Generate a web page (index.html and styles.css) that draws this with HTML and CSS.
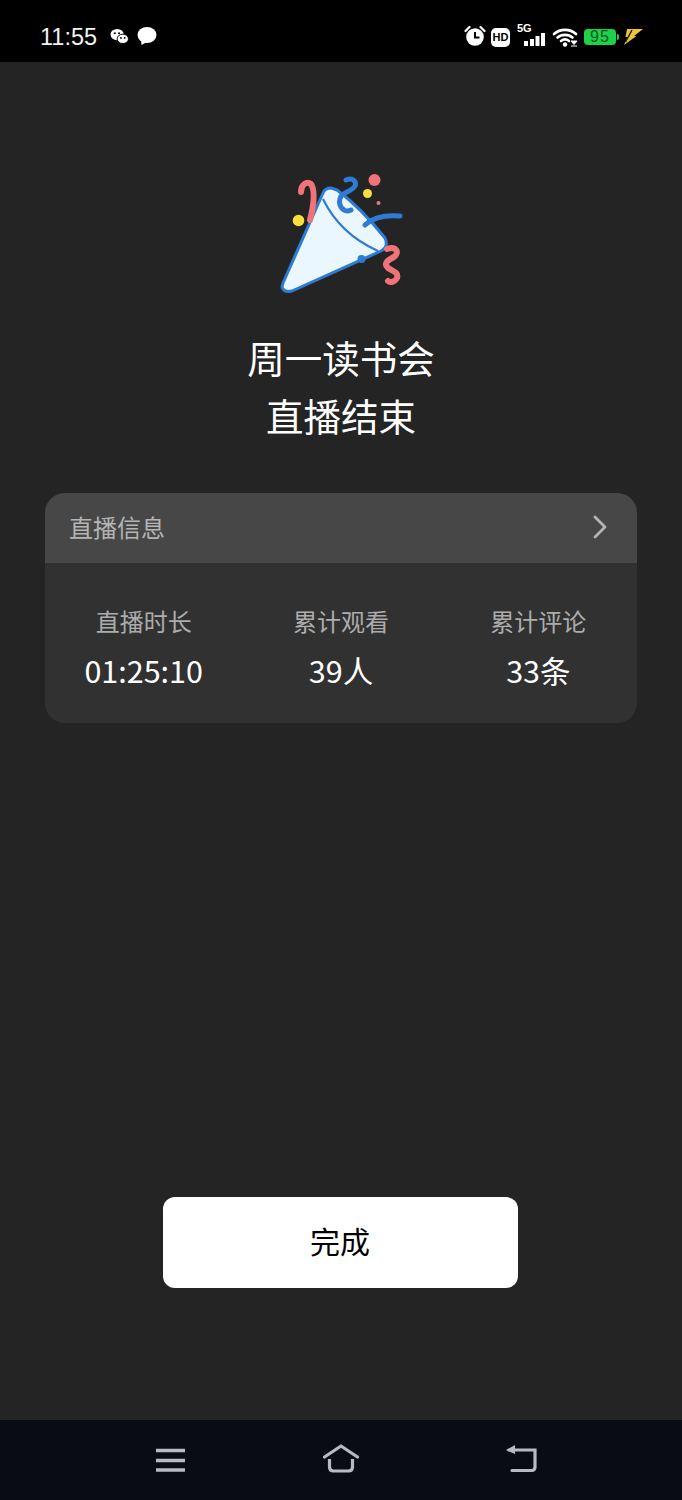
FILE: index.html
```html
<!DOCTYPE html>
<html lang="zh">
<head>
<meta charset="utf-8">
<title>直播结束</title>
<link rel="stylesheet" href="styles.css">
</head>
<body>
<div class="screen">
  <header class="status">
    <div class="status-left">
      <span class="time">11:55</span>
      <svg class="ic-wechat" viewBox="0 0 20 18"><ellipse cx="7.5" cy="7" rx="7" ry="6" fill="#fff"/><ellipse cx="13.5" cy="11.5" rx="6" ry="5" fill="#fff" stroke="#000" stroke-width="1"/><circle cx="5" cy="5.5" r="1.1" fill="#000"/><circle cx="9.5" cy="5.5" r="1.1" fill="#000"/><circle cx="11.5" cy="10.5" r="1" fill="#000"/><circle cx="15.5" cy="10.5" r="1" fill="#000"/></svg>
      <svg class="ic-msg" viewBox="0 0 20 18"><ellipse cx="10" cy="8" rx="9.5" ry="8" fill="#fff"/><path d="M4 12 L4.5 18 L10 15 Z" fill="#fff"/></svg>
    </div>
    <div class="status-right">
      <svg class="ic-alarm" viewBox="0 0 22 22"><circle cx="11" cy="12" r="8.800" fill="#fff"/><path d="M11 7V12.500H15.500" fill="none" stroke="#000" stroke-width="2"/><path d="M1.500 6L5.500 2M20.500 6L16.500 2" stroke="#fff" stroke-width="2.200" stroke-linecap="round"/></svg>
      <span class="hd">HD</span>
      <svg class="ic-signal" viewBox="0 0 28 26"><text x="0" y="10" class="sig-text">5G</text><rect x="7" y="19" width="4" height="5" fill="#fff"/><rect x="13" y="17" width="4" height="7" fill="#fff"/><rect x="18.500" y="14" width="4" height="10" fill="#fff"/><rect x="24" y="11" width="4" height="13" fill="#fff"/></svg>
      <svg class="ic-wifi" viewBox="0 0 26 20"><path d="M2 7C8 1.500 18 1.500 24 7M5.500 10.500C9.500 7 16.500 7 20.500 10.500M9 14C11.500 12 14.500 12 17 14" fill="none" stroke="#fff" stroke-width="2.600" stroke-linecap="round"/><circle cx="13" cy="17.500" r="2.200" fill="#fff"/><path d="M19 14H25L22 17.500ZM19 19H25" fill="#fff" stroke="#fff" stroke-width="1"/></svg>
      <div class="battery"><span class="battery-num">95</span></div>
      <svg class="ic-bolt" viewBox="0 0 22 18"><path d="M5 1H21L12 8L14.500 8L2 17L5.500 9L3.500 9Z" fill="#eec534"/><path d="M10 2L3.500 14" stroke="#111" stroke-width="1.400"/></svg>
    </div>
  </header>

  <main class="content">
    <svg class="party" viewBox="261 160 160 150">
      <path d="M283 283L323 193Q325 188 331 188L337 190Q361 208 385 238Q389 247 381 251L292 291Q284 293 282 287Z" fill="#eaf7ff" stroke="#2e7bd6" stroke-width="3" stroke-linejoin="round"/>
      <path d="M323 199Q340 234 378 251" fill="none" stroke="#2e7bd6" stroke-width="2.200"/>
      <path d="M310 220C314 204 315 190 311 184C307 181 301 184 301 192" fill="none" stroke="#f0737a" stroke-width="6" stroke-linecap="round"/>
      <path d="M346 180C353 177 357 182 355 186C352 191 345 192 342 195C338 200 339 207 344 210C347 212 349 211 351 210" fill="none" stroke="#2e7bd6" stroke-width="5" stroke-linecap="round"/>
      <path d="M365 225C373 217 386 215 400 216" fill="none" stroke="#2e7bd6" stroke-width="5" stroke-linecap="round"/>
      <path d="M387 249C396 246 400 252 394 257C388 260 383 263 388 268C392 271 399 272 397 278C395 282 390 283 388 281" fill="none" stroke="#f0737a" stroke-width="6" stroke-linecap="round"/>
      <circle cx="374.500" cy="180" r="6" fill="#f0737a"/>
      <circle cx="367.500" cy="193.500" r="4.500" fill="#f7e03c"/>
      <circle cx="298.500" cy="220.500" r="5.800" fill="#f7e03c"/>
      <circle cx="378.500" cy="203" r="2" fill="#e07a78"/>
      <circle cx="361.500" cy="259" r="4" fill="#2e7bd6"/>
    </svg>

    <h1 class="title">周一读书会<br>直播结束</h1>

    <section class="card">
      <div class="card-head">
        <span>直播信息</span>
        <svg class="chev" viewBox="0 0 16 24"><path d="M3 2L13 12L3 22" fill="none" stroke="#b5b5b5" stroke-width="2.800" stroke-linecap="round" stroke-linejoin="round"/></svg>
      </div>
      <div class="stats">
        <div class="stat"><div class="stat-label">直播时长</div><div class="stat-value">01:25:10</div></div>
        <div class="stat"><div class="stat-label">累计观看</div><div class="stat-value">39人</div></div>
        <div class="stat"><div class="stat-label">累计评论</div><div class="stat-value">33条</div></div>
      </div>
    </section>

    <button class="done">完成</button>
  </main>

  <nav class="navbar">
    <svg class="nav-ic" viewBox="0 0 40 40"><path d="M5 10.500H34M5 20.500H34M5 30H34" stroke="#b9bac0" stroke-width="3.600"/></svg>
    <svg class="nav-ic nav-home" viewBox="0 0 40 40"><path d="M3.500 17L20 6L36.500 17" fill="none" stroke="#b9bac0" stroke-width="3.200" stroke-linecap="round" stroke-linejoin="round"/><path d="M8.500 19V27Q8.500 31 12.500 31H27.500Q31.500 31 31.500 27V19" fill="none" stroke="#b9bac0" stroke-width="3.200"/></svg>
    <svg class="nav-ic" viewBox="0 0 40 40"><path d="M8 10H34V27Q34 30.500 30.500 30.500H11" fill="none" stroke="#b9bac0" stroke-width="3.200" stroke-linecap="round"/><path d="M5 10L14 5V14Z" fill="#b9bac0"/></svg>
  </nav>
</div>
</body>
</html>
```
FILE: styles.css
```css
* { box-sizing: border-box; }
html, body { margin: 0; padding: 0; background: #242424; }
body { font-family: "Noto Sans CJK SC", "Noto Sans", sans-serif; }
.screen { width: 682px; height: 1500px; display: flex; flex-direction: column; overflow: hidden; }

.status { height: 62px; flex: none; background: #000; color: #fff; display: flex; justify-content: space-between; align-items: center; padding: 12px 38px 0 40px; }
.status-left, .status-right { display: flex; align-items: center; }
.time { font-family: "Liberation Sans", sans-serif; font-size: 23.500px; line-height: 30px; color: #f2f2f2; width: 56px; white-space: nowrap; }
.ic-wechat { width: 19px; height: 17px; margin-left: 14px; margin-top: -2px; }
.ic-msg { width: 20px; height: 18px; margin-left: 8px; margin-top: -2px; }
.ic-alarm { width: 22px; height: 22px; margin-top: -2px; }
.hd { width: 19px; height: 19px; margin-left: 5px; background: #fff; color: #000; border-radius: 5px; font: 700 11px/19px "Liberation Sans", sans-serif; text-align: center; }
.ic-signal { width: 28px; height: 26px; margin-left: 7px; margin-top: -5px; }
.sig-text { font: 700 11px "Liberation Sans", sans-serif; fill: #fff; }
.ic-wifi { width: 26px; height: 20px; margin-left: 7px; }
.battery { width: 32px; height: 16px; margin-left: 6px; background: #1fd14a; border-radius: 4px; text-align: center; position: relative; }
.battery::after { content: ""; position: absolute; right: -3px; top: 5px; width: 2px; height: 6px; background: #1fd14a; border-radius: 0 2px 2px 0; }
.battery-num { font: 400 16px/16px "Liberation Sans", sans-serif; letter-spacing: 1px; color: #0b5a20; display: block; }
.ic-bolt { width: 22px; height: 18px; margin-left: 6px; }

.content { flex: 1; background: #242424; display: flex; flex-direction: column; align-items: center; padding-top: 98px; }
.party { width: 160px; height: 150px; display: block; flex: none; }
.title { margin: 18px 0 0; font-size: 37.500px; line-height: 58px; font-weight: 400; color: #fff; text-align: center; }

.card { width: 592px; height: 230px; margin-top: 49px; border-radius: 20px; overflow: hidden; background: #313131; }
.card-head { height: 70px; background: #474747; display: flex; align-items: center; justify-content: space-between; padding: 0 29px 3px 24px; color: #b4b4b4; font-size: 24px; }
.chev { width: 16px; height: 24px; }
.stats { display: grid; grid-template-columns: repeat(3, 1fr); padding: 40px 0 0; }
.stat { text-align: center; }
.stat-label { font-size: 24px; line-height: 36px; color: #acacac; }
.stat-value { font-size: 30.500px; line-height: 44px; margin-top: 9px; color: #fff; }

.done { margin-top: auto; margin-bottom: 132px; margin-right: 2px; width: 355px; height: 91px; background: #fff; color: #000; border: 0; border-radius: 12px; font-family: inherit; font-size: 30px; padding: 0 0 5px; }

.navbar { height: 80px; flex: none; background: #0a0c14; display: flex; justify-content: center; align-items: center; gap: 130px; padding-left: 10px; }
.nav-ic { width: 40px; height: 40px; }
.nav-home { margin-right: 10px; }
```
